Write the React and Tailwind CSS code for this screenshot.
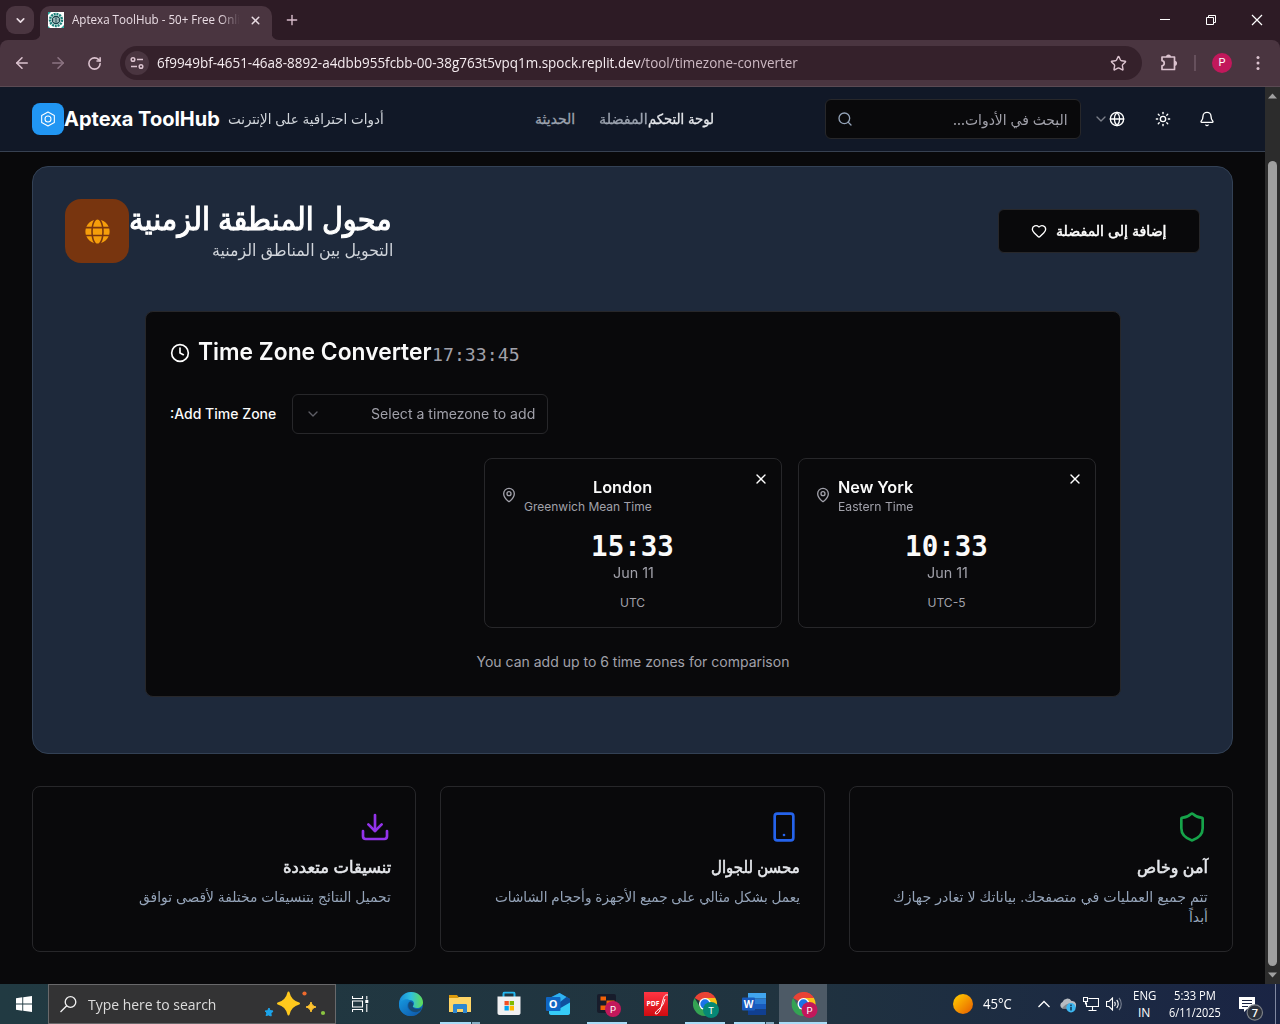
import { useLayoutEffect, useRef } from "react";
import {
  ArrowLeft, ArrowRight, Bell, ChevronDown, Clock, Download, Globe, Heart,
  MapPin, Plus, RotateCw, Search, Shield, Star, Sun, X,
} from "lucide-react";
import { FaGlobe } from "react-icons/fa";

/* One line of text condensed or stretched to a given width. */
function Fit({ w, className = "", rtl = false, children }) {
  const ref = useRef(null);
  useLayoutEffect(() => {
    const el = ref.current;
    el.style.transform = "scaleX(" + w / el.offsetWidth + ")";
  }, [w]);
  return (
    <span className={"block shrink-0 whitespace-nowrap " + className} style={{ width: w }} dir="ltr">
      <span ref={ref} dir={rtl ? "rtl" : "ltr"} className="inline-block origin-left align-top">{children}</span>
    </span>
  );
}

function TabStrip() {
  return (
    <div className="flex h-10 items-end bg-[#2d1b25] pl-[6px] text-[#e9dce3]">
      <div className="mb-[6px] flex h-7 w-7 items-center justify-center rounded-[9px] bg-[#4a3540]">
        <ChevronDown size={13} strokeWidth={3} />
      </div>
      <svg className="-mx-px h-2 w-2 shrink-0" viewBox="0 0 8 8"><path d="M8 0v8H0A8 8 0 0 0 8 0Z" fill="#4a3540" /></svg>
      <div className="flex h-[34px] w-[232px] items-center rounded-t-[10px] bg-[#4a3540] pb-[6px] pl-2">
        <svg width="16" height="16" viewBox="0 0 16 16">
          <rect width="16" height="16" fill="#fff" />
          <circle cx="8" cy="8" r="6" fill="#d9efec" stroke="#1b7f79" strokeWidth="2.4" strokeDasharray="2 .8" />
          <circle cx="8" cy="8" r="3.6" fill="#e8f5f3" stroke="#163f48" strokeWidth="1.3" />
          <path d="M8 4v8M4 8h8M5.5 5.5c2 1 3 1 5 0M5.5 10.5c2-1 3-1 5 0" stroke="#1c4a52" fill="none" strokeWidth=".8" />
          <path d="M0 0h3L0 3zM16 16h-3l3-3zM0 16v-2l2 2z" fill="#2aa79c" />
        </svg>
        <div className="ml-2 w-[168px] overflow-hidden [mask-image:linear-gradient(to_right,black_88%,transparent)]">
          <Fit w={168} className="text-[12.5px] leading-4 font-['Open_Sans',sans-serif]">Aptexa ToolHub - 50+ Free Onli</Fit>
        </div>
        <X className="ml-[9px]" size={13} strokeWidth={2.8} />
      </div>
      <svg className="h-2 w-2 shrink-0 -ml-px" viewBox="0 0 8 8"><path d="M0 0v8h8A8 8 0 0 1 0 0Z" fill="#4a3540" /></svg>
      <Plus className="mb-[12px] ml-[5px] text-[#d8bccb]" size={16} strokeWidth={2.1} />
      <svg className="mb-[14px] ml-auto mr-[16px] text-white" width="104" height="12" viewBox="0 0 104 12" fill="none" stroke="currentColor">
        <path d="M0 5.500h10M48.500 3.500v-2h7v7h-2M46.500 3.500h7v7h-7z" strokeWidth="1" />
        <path d="M92 1l10 10M102 1l-10 10" strokeWidth="1.200" />
      </svg>
    </div>
  );
}

function Toolbar() {
  return (
    <div className="h-[47px] bg-[#2d1b25]">
      <div className="flex h-full items-center rounded-t-[8px] border-b border-[#5b4a53] bg-[#4a3540] text-[#dcc3cf]">
        <ArrowLeft className="ml-[13px]" size={18} strokeWidth={2.1} />
        <ArrowRight className="ml-[18px] text-[#8c7482]" size={18} strokeWidth={2.1} />
        <RotateCw className="ml-[20px]" size={15} strokeWidth={2.5} />
        <div className="ml-[18px] flex h-[34px] w-[1022px] items-center rounded-full bg-[#35212b] pl-[5px]">
          <div className="flex h-6 w-6 items-center justify-center rounded-full bg-[#4a3540]">
            <svg width="14" height="14" viewBox="0 0 14 14" fill="none" stroke="currentColor" strokeWidth="1.500">
              <circle cx="3" cy="3.500" r="1.800" /><path d="M7 3.500h6M1 10.500h6" /><circle cx="11" cy="10.500" r="1.800" />
            </svg>
          </div>
          <Fit w={641} className="ml-2 text-[14px] leading-5 text-[#f5ecf0] font-['Open_Sans',sans-serif]">
            6f9949bf-4651-46a8-8892-a4dbb955fcbb-00-38g763t5vpq1m.spock.replit.dev<span className="text-[#cdb9c3]">/tool/timezone-converter</span>
          </Fit>
          <Star className="ml-auto mr-[15px]" size={17} strokeWidth={2} />
        </div>
        <svg className="ml-[18px]" width="18" height="18" viewBox="0 0 18 18" fill="none" stroke="currentColor" strokeWidth="1.700" strokeLinejoin="round">
          <path d="M2 3h12.500v12.500H2v-3.700c3-.5 3-4.600 0-5.100Z" />
          <path d="M6.800 3a1.700 1.700 0 0 1 3.400 0M14.500 7.500a1.700 1.700 0 0 1 0 3.400" fill="currentColor" />
        </svg>
        <div className="ml-[16px] h-4 w-[2px] bg-[#66505c]" />
        <div className="ml-4 flex h-5 w-5 items-center justify-center rounded-full bg-[#c2185b] text-[11px] text-white font-[Roboto,sans-serif]">P</div>
        <svg className="ml-[24px]" width="4" height="16" viewBox="0 0 4 16" fill="currentColor">
          <circle cx="2" cy="2.500" r="1.500" /><circle cx="2" cy="8" r="1.500" /><circle cx="2" cy="13.500" r="1.500" />
        </svg>
      </div>
    </div>
  );
}

function SiteHeader() {
  return (
    <header className="flex h-[65px] items-center border-b border-[#374151] bg-[#111827] pl-8">
      <div className="flex h-8 w-8 items-center justify-center rounded-lg bg-[#2196f3] text-white">
        <svg width="16" height="16" viewBox="0 0 24 24" fill="none" stroke="currentColor" strokeWidth="1.600" strokeLinejoin="round">
          <path d="M12 1.500 21.500 6.700v10.600L12 22.500 2.500 17.300V6.700Z" /><circle cx="12" cy="12" r="4.500" />
        </svg>
      </div>
      <Fit w={156} className="text-xl font-bold text-white">Aptexa ToolHub</Fit>
      <Fit rtl w={156} className="ml-[8px] text-[14px] leading-5 text-[#d1d5db]">أدوات احترافية على الإنترنت</Fit>
      <nav className="ml-[151px] flex items-center text-[14px] leading-5 text-[#9ca3af] [-webkit-text-stroke:0.3px_currentColor]">
        <Fit rtl w={40}>الحديثة</Fit>
        <Fit rtl w={49} className="ml-6">المفضلة</Fit>
        <Fit rtl w={66} className="text-[#e5e7eb]">لوحة التحكم</Fit>
      </nav>
      <div className="ml-[111px] flex h-10 w-64 items-center justify-between rounded-md border border-[#27272a] bg-[#09090b] pl-[11px] pr-3">
        <Search size={16} className="text-[#94a3b8]" />
        <Fit rtl w={115} className="mt-px text-[14.5px] leading-5 text-[#a1a1aa]">البحث في الأدوات...</Fit>
      </div>
      <ChevronDown size={16} className="ml-3 text-[#7c808a]" />
      <Globe size={16} className="text-white" />
      <Sun size={16} className="ml-[30px] text-white" />
      <Bell size={16} className="ml-7 text-white" />
    </header>
  );
}

function ZoneCard({ city, cityW, zone, zoneW, time, offset }) {
  return (
    <div className="relative h-[170px] w-[298px] rounded-lg border border-[#27272a] p-4">
      <div className="flex items-center">
        <MapPin size={16} className="text-[#a1a1aa]" />
        <div className="ml-[7px] flex flex-col items-end">
          <Fit w={cityW} className="text-base font-semibold text-[#fafafa]">{city}</Fit>
          <Fit w={zoneW} className="text-xs text-[#a1a1aa]">{zone}</Fit>
        </div>
      </div>
      <X size={16} className="absolute right-[12px] top-[12px] text-white" />
      <div className="flex flex-col items-center pr-px pt-3 text-center">
        <div className="h-9 text-[27.500px] leading-[38px] font-bold text-[#fafafa] font-['DejaVu_Sans_Mono',monospace]">{time}</div>
        <Fit w={41} className="text-sm text-[#a1a1aa]">Jun 11</Fit>
        <div className="mt-3 text-xs text-[#a1a1aa]">{offset}</div>
      </div>
    </div>
  );
}

function Converter() {
  return (
    <section className="ml-28 mt-12 h-[386px] w-[976px] rounded-lg border border-[#27272a] bg-[#09090b] px-6 pt-6">
      <div className="flex h-8 items-center">
        <Clock size={20} className="mt-[2px] text-white" />
        <Fit w={234} className="ml-2 text-2xl font-semibold text-[#fafafa]">Time Zone Converter</Fit>
        <span className="mt-[6px] text-[18.200px] leading-6 text-[#a1a1aa] font-['DejaVu_Sans_Mono',monospace]">17:33:45</span>
      </div>
      <div className="mt-[26px] flex items-center">
        <Fit w={106} className="text-sm font-medium text-[#fafafa]">:Add Time Zone</Fit>
        <div className="ml-4 flex h-10 w-64 items-center justify-between rounded-md border border-[#27272a] px-3">
          <ChevronDown size={16} className="text-[#5f5f66]" />
          <Fit w={164} className="text-sm text-[#a1a1aa]">Select a timezone to add</Fit>
        </div>
      </div>
      <div className="mt-6 flex justify-end gap-4">
        <ZoneCard city="London" cityW={59} zone="Greenwich Mean Time" zoneW={128} time="15:33" offset="UTC" />
        <ZoneCard city="New York" cityW={75} zone="Eastern Time" zoneW={75} time="10:33" offset="UTC-5" />
      </div>
      <div className="mt-6 flex justify-center">
        <Fit w={313} className="text-sm text-[#a1a1aa]">You can add up to 6 time zones for comparison</Fit>
      </div>
    </section>
  );
}

function Feature({ icon, title, titleW, lines }) {
  return (
    <div className="flex h-[166px] flex-1 flex-col items-end rounded-lg border border-[#27272a] p-6">
      {icon}
      <Fit rtl w={titleW} className="mt-3 h-6 text-[16.500px] leading-6 text-[#e5e7eb] [-webkit-text-stroke:0.6px_currentColor]">{title}</Fit>
      <div className="mt-2 flex flex-col items-end">
        {lines.map(([text, w]) => (
          <Fit rtl key={text} w={w} className="h-5 text-[14px] leading-5 text-[#94a3b8]">{text}</Fit>
        ))}
      </div>
    </div>
  );
}

function PhoneIcon() {
  return (
    <svg width="32" height="32" viewBox="0 0 24 24" fill="none" stroke="#2563eb" strokeWidth="2" strokeLinecap="round">
      <rect x="5" y="2" width="14" height="20" rx="2" /><path d="M12 18h.01" />
    </svg>
  );
}

function ScrollBar() {
  return (
    <div className="flex w-[15px] shrink-0 flex-col items-center bg-[#2c2c2c] py-[6px]">
      <svg width="9" height="6" viewBox="0 0 9 6"><path d="M0 5.500 4.500.5 9 5.500Z" fill="#a0a0a0" /></svg>
      <div className="mt-[62px] w-[9px] flex-1 rounded-full bg-[#9f9f9f]" />
      <svg className="mt-[6px]" width="9" height="6" viewBox="0 0 9 6"><path d="M0 .5 4.500 5.500 9 .5Z" fill="#a0a0a0" /></svg>
    </div>
  );
}

function ChromeIcon({ letter, color }) {
  return (
    <svg width="27" height="27" viewBox="0 0 27 27">
      <path d="M12 12 1.600 6A12 12 0 0 1 22.400 6Z" fill="#e94335" />
      <path d="M12 12V0A12 12 0 0 1 22.400 6H12Z" fill="#e94335" />
      <path d="M12 6h10.400A12 12 0 0 1 12 24l5-9Z" fill="#fbc116" />
      <path d="M1.600 6A12 12 0 0 0 12 24l5.200-9H7Z" fill="#34a353" />
      <circle cx="12" cy="12" r="6" fill="#fff" /><circle cx="12" cy="12" r="4.700" fill="#1a73e8" />
      <circle cx="18" cy="18" r="8" fill={color} />
      <text x="18" y="21.500" textAnchor="middle" fontSize="9.500" fill="#fff" fontFamily="Roboto">{letter}</text>
    </svg>
  );
}

function EdgeIcon() {
  return (
    <svg width="24" height="24" viewBox="0 0 24 24">
      <defs>
        <linearGradient id="edgeTop" x1="0" x2="1"><stop offset="0" stopColor="#1689d8" /><stop offset=".5" stopColor="#30c0dd" /><stop offset="1" stopColor="#62dd51" /></linearGradient>
        <linearGradient id="edgeLow" x1="0" y1="0" x2="1" y2="1"><stop offset="0" stopColor="#1598df" /><stop offset="1" stopColor="#0f55a8" /></linearGradient>
      </defs>
      <circle cx="12" cy="12" r="12" fill="#0c65b8" />
      <path d="M0 11C1 4 6 0 12 0c7 0 12 5 12 10.500 0 3.500-3 5.500-6 5.500-3 0-4.500-1.200-4-2 2-2.500 1-6-4-6C5 8 1 10 0 14Z" fill="url(#edgeTop)" />
      <path d="M0 13c1-5 8-8 12-4-5 1-5 9 1 11 3 1 6 0 9-2-3 5-8 6-11 6C5 23.500 0 19 0 13Z" fill="url(#edgeLow)" />
      <path d="M11 9.500c-3 2.500-2.500 9 4 10.500 3 .6 6-.8 7.500-2.500.5-1-.5-1.500-1.500-1-3 1.500-7 0-7.500-2 1.500-1.500 1-4-2.500-5Z" fill="#203640" opacity=".55" />
    </svg>
  );
}

function TaskIcon({ children, open, stacked, active }) {
  return (
    <div className={"relative flex h-10 shrink-0 items-center justify-center " + (active ? "ml-px w-12 bg-[#4d5a66]" : "w-[49px]")}>
      {children}
      {open && (
        <div className={"absolute bottom-0 flex h-[2px] bg-[#a9ddf8] " + (active ? "inset-x-0" : "left-[5px] w-10")}>
          {stacked && <div className="ml-auto w-[9px] border-l border-[#24414d] bg-[#87aec4]" />}
        </div>
      )}
    </div>
  );
}

function Taskbar() {
  return (
    <footer className="flex h-10 items-center bg-linear-to-r from-[#213a42] via-[#20333f] via-60% to-[#1a2444] text-white font-['Open_Sans',sans-serif]">
      <div className="flex w-12 shrink-0 justify-center">
        <svg width="16" height="16" viewBox="0 0 16 16" fill="#fff"><path d="M0 2.200 6.300 1.300v6.200H0ZM7.200 1.200 16 0v7.500H7.200ZM0 8.400h6.300v6.300L0 13.800ZM7.200 8.400H16V16l-8.800-1.200Z" /></svg>
      </div>
      <div className="flex h-10 w-72 shrink-0 items-center border border-[#69696b] bg-[#333334]">
        <svg className="ml-[11px]" width="17" height="17" viewBox="0 0 17 17" fill="none" stroke="#f2f2f2" strokeWidth="1.300">
          <circle cx="10.500" cy="6" r="5.300" /><path d="M6.700 9.800.5 16" />
        </svg>
        <Fit w={128} className="ml-[11px] mt-px text-[14.500px] leading-5 text-[#dcdcdc]">Type here to search</Fit>
        <svg className="ml-[48px]" width="64" height="26" viewBox="0 0 64 26">
          <path d="M24.500 1.500c1.300 6 4.500 9.500 10.500 11-6 1.500-9.200 5-10.500 11-1.300-6-4.500-9.500-10.500-11 6-1.500 9.200-5 10.500-11Z" fill="#ffc91d" stroke="#ffc91d" strokeWidth="2" strokeLinejoin="round" />
          <path d="M47 11c.8 3 2 4.200 5 5-3 .8-4.200 2-5 5-.8-3-2-4.200-5-5 3-.8 4.200-2 5-5Z" fill="#ffc32e" stroke="#ffc32e" strokeLinejoin="round" />
          <path d="m5 17 1 2.500 3 .5-2 2.500.2 2.500-2.700-1-2.500.5 1-2.500-2-2 2.500-.3Z" fill="#1ba4ea" stroke="#1ba4ea" strokeLinejoin="round" />
          <circle cx="40.500" cy="2.500" r="2.100" fill="#ef6a2d" /><circle cx="59" cy="22" r="2.100" fill="#8cc541" />
        </svg>
      </div>
      <div className="flex w-[50px] shrink-0 justify-center">
        <svg className="-translate-x-px" width="17" height="16" viewBox="0 0 17 16" fill="none" stroke="#fff" strokeWidth="1.100">
          <path d="M.5 0v2.500h10V0M.5 16v-2.500h10V16M.5 5h10v6H.5zM14.800 0v3.500M14.800 8v8" /><path d="M13.300 4h3v3h-3z" fill="#fff" stroke="none" />
        </svg>
      </div>
      <TaskIcon><EdgeIcon /></TaskIcon>
      <TaskIcon open stacked>
        <svg width="22" height="20" viewBox="0 0 22 20">
          <path d="M0 1h8l1.500 2H21v6H0Z" fill="#dc9a0b" /><path d="M0 4h9l1-1h12v15H0Z" fill="#ffd566" />
          <path d="M4 19v-7.500c0-1 .5-1.500 1.500-1.500h11c1 0 1.500.5 1.500 1.500V19h-4v-4H8v4Z" fill="#2f87d0" />
        </svg>
      </TaskIcon>
      <TaskIcon>
        <svg className="translate-y-[-0.5px]" width="24" height="24" viewBox="0 0 24 24">
          <path d="M6.500 6V2.200c0-.7.400-1.200 1.200-1.200h8.600c.8 0 1.200.5 1.200 1.200V6" fill="none" stroke="#25b7ef" strokeWidth="2" />
          <path d="M.5 5h23v16.500c0 1-.8 2-2 2h-19c-1.200 0-2-1-2-2Z" fill="#f0f0f1" />
          <path d="M7.500 9.500h4.300v4.300H7.500z" fill="#f25022" /><path d="M12.700 9.500H17v4.300h-4.300z" fill="#7fba00" /><path d="M7.500 14.600h4.300v4.300H7.500z" fill="#00a4ef" /><path d="M12.700 14.600H17v4.300h-4.300z" fill="#ffb900" />
        </svg>
      </TaskIcon>
      <TaskIcon>
        <svg className="translate-x-px" width="25" height="24" viewBox="0 0 25 24">
          <path d="M3 6 13.500 1 24 7v14l-2 2H5l-2-2Z" fill="#1673cd" /><path d="M4 6l9.500-5 7 4-6 6H4Z" fill="#2fb2f0" />
          <path d="M14 10 20.500 5 24 7v5l-10 7Z" fill="#0f4f9f" /><path d="M3 19 14.500 16 24 10.500V21c0 1-1 2-2 2H5c-1 0-2-1-2-2Z" fill="#36cbf7" />
          <rect y="5" width="14.500" height="14" rx="1" fill="#0f66c3" />
          <text x="7.200" y="16" textAnchor="middle" fontSize="11" fontWeight="bold" fill="#fff" fontFamily="Open Sans">O</text>
        </svg>
      </TaskIcon>
      <TaskIcon open>
        <svg className="translate-x-[2px]" width="24" height="26" viewBox="0 0 24 26">
          <rect x="0" y="3" width="19" height="19" rx="2" fill="#171c2b" />
          <path d="M3.500 5.500h5.500v4H3.500zM9.500 9.500h8v5h-8zM3.500 14.500h5.500v4.500H3.500z" fill="#f26207" />
          <circle cx="16" cy="18" r="8" fill="#c2185b" />
          <text x="16" y="21.500" textAnchor="middle" fontSize="9.500" fill="#fff" fontFamily="Roboto">P</text>
        </svg>
      </TaskIcon>
      <TaskIcon>
        <svg width="24" height="24" viewBox="0 0 24 24">
          <defs><linearGradient id="pdfRed" x1="0" y1="0" x2="0" y2="1"><stop offset="0" stopColor="#ff3543" /><stop offset="1" stopColor="#d00b10" /></linearGradient></defs>
          <rect width="24" height="24" fill="url(#pdfRed)" />
          <text x="2.500" y="14" fontSize="6.800" fontWeight="bold" fill="#fff" fontFamily="Open Sans" textLength="13">PDF</text>
          <path d="M24 3c-3-.5-4 1-5 5l-2.500 9c-1 3-3 5-4.500 5s-1-2 3-5c4-3 5-7 6-10" fill="none" stroke="#fff" strokeWidth="1" />
        </svg>
      </TaskIcon>
      <TaskIcon open><div className="translate-x-[2px] translate-y-px"><ChromeIcon letter="T" color="#068875" /></div></TaskIcon>
      <TaskIcon open stacked>
        <svg width="24" height="22" viewBox="0 0 24 22">
          <path d="M6 0h18v5.500H6z" fill="#41a5ee" /><path d="M6 5.500h18V11H6z" fill="#2b7cd3" /><path d="M6 11h18v5.500H6z" fill="#185abd" /><path d="M6 16.500h18V22H6z" fill="#103f91" />
          <rect y="4.500" width="13" height="13" rx="1" fill="#185abd" />
          <text x="6.500" y="14.700" textAnchor="middle" fontSize="10" fontWeight="bold" fill="#fff" fontFamily="Open Sans">W</text>
        </svg>
      </TaskIcon>
      <TaskIcon open active><div className="translate-x-[1.5px] translate-y-px"><ChromeIcon letter="P" color="#c2185b" /></div></TaskIcon>

      <div className="ml-auto h-5 w-5 rounded-full bg-linear-to-br from-[#ffd200] to-[#e45700]" />
      <Fit w={29} className="ml-[10px] text-[14px] leading-5">45°C</Fit>
      <svg className="ml-[26px]" width="12" height="8" viewBox="0 0 12 8"><path d="M.5 7 6 1.500 11.500 7" fill="none" stroke="#fff" strokeWidth="1.300" /></svg>
      <svg className="ml-[9px] mt-[3px]" width="17" height="15" viewBox="0 0 17 15">
        <path d="M3.500 10.500a3.500 3.500 0 0 1 0-6.500A5 5 0 0 1 12.500 3 4 4 0 0 1 15 10.500Z" fill="#b8bcc2" />
        <path d="M3 10.500c2-3 6-6 11-5l1 5Z" fill="#84898f" />
        <circle cx="12" cy="9.700" r="4.700" fill="#3db7f1" /><path d="M12 8.800v3.800M12 6.600v1.300" stroke="#0b2a45" strokeWidth="1.400" />
      </svg>
      <svg className="ml-[7px]" width="16" height="14" viewBox="0 0 16 14" fill="none" stroke="#fff" strokeWidth="1.100">
        <path d="M5.500 1.500h10v8h-12V5.500M9.500 9.500v4M5.500 13.500h8M.5.500h4v4h-4zM2.500 4.500v3" />
      </svg>
      <svg className="ml-[7px]" width="17" height="14" viewBox="0 0 17 14" fill="none" stroke="#fff" strokeWidth="1.100">
        <path d="M.5 4.500h2.500l3.500-3.500v12L3 9.500H.5zM8.500 5c1 1 1 3 0 4M10.700 3c2 2 2 6 0 8" /><path d="M13 1c3 3 3 9 0 12" stroke="#7c8494" />
      </svg>
      <div className="ml-[9px] flex w-[24px] flex-col items-center text-[12px] leading-[17px]"><Fit w={23}>ENG</Fit><Fit w={12}>IN</Fit></div>
      <div className="ml-[12px] flex w-[54px] flex-col items-center text-[12px] leading-[17px]"><Fit w={42}>5:33 PM</Fit><Fit w={52}>6/11/2025</Fit></div>
      <svg className="ml-[17px] mt-[9px]" width="25" height="25" viewBox="0 0 25 25">
        <path d="M0 1h16v12H8l-3 3v-3H0Z" fill="#fff" /><path d="M3 4.500h10M3 7.500h10M3 10.500h6" stroke="#1b2542" strokeWidth="1.100" />
        <circle cx="15.800" cy="16.500" r="7.700" fill="#2b303b" stroke="#7c8087" strokeWidth="1.200" />
        <text x="15.800" y="20.500" textAnchor="middle" fontSize="11" fontWeight="600" fill="#fff" fontFamily="Open Sans">7</text>
      </svg>
      <div className="ml-[11px] mr-1 h-10 w-px bg-[#8088a0]" />
    </footer>
  );
}

export default function App() {
  return (
    <div className="flex h-[1024px] w-[1280px] flex-col overflow-hidden bg-[#09090b] font-[Inter,'DejaVu_Sans',sans-serif]">
      <TabStrip />
      <Toolbar />
      <div className="flex min-h-0 flex-1">
        <div className="min-w-0 flex-1">
          <SiteHeader />
          <main className="pl-8 pt-[14px]">
            <div className="h-[588px] w-[1201px] rounded-2xl border border-[#334155] bg-[#1e293b]">
              <div className="flex items-center px-8 pt-8">
                <div className="flex h-16 w-16 items-center justify-center rounded-2xl bg-[#78350f]">
                  <FaGlobe size={25} className="text-[#f59e0b]" />
                </div>
                <div className="flex flex-col items-end">
                  <Fit rtl w={263} className="mr-px h-9 text-[31px] leading-9 text-white [-webkit-text-stroke:1.1px_currentColor]">محول المنطقة الزمنية</Fit>
                  <Fit rtl w={181} className="h-6 text-[16.500px] leading-[26px] text-[#d1d5db]">التحويل بين المناطق الزمنية</Fit>
                </div>
                <div className="ml-auto flex h-11 w-[202px] items-center justify-center gap-[9px] rounded-md border border-[#27272a] bg-[#09090b]">
                  <Heart size={16} className="text-white" />
                  <Fit rtl w={111} className="text-[14px] leading-5 text-white [-webkit-text-stroke:0.5px_currentColor]">إضافة إلى المفضلة</Fit>
                </div>
              </div>
              <Converter />
            </div>
            <div className="mt-8 flex w-[1201px] gap-6">
              <Feature icon={<Download size={32} color="#9333ea" />} title="تنسيقات متعددة" titleW={108} lines={[["تحميل النتائج بتنسيقات مختلفة لأقصى توافق", 252]]} />
              <Feature icon={<PhoneIcon />} title="محسن للجوال" titleW={89} lines={[["يعمل بشكل مثالي على جميع الأجهزة وأحجام الشاشات", 305]]} />
              <Feature icon={<Shield size={32} color="#16a34a" />} title="آمن وخاص" titleW={71} lines={[["تتم جميع العمليات في متصفحك. بياناتك لا تغادر جهازك", 315], ["أبداً", 19]]} />
            </div>
          </main>
        </div>
        <ScrollBar />
      </div>
      <Taskbar />
    </div>
  );
}
